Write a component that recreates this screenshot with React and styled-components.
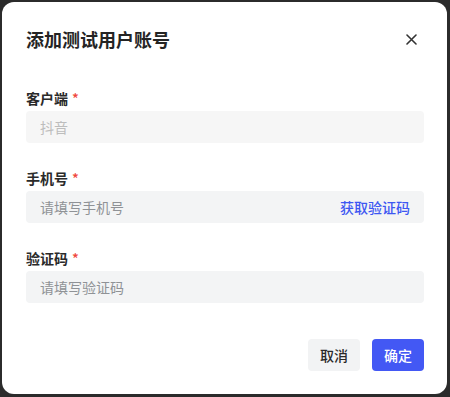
import React from "react";
import styled, { createGlobalStyle } from "styled-components";

const Global = createGlobalStyle`
  html, body { margin: 0; padding: 0; background: #2b2b2b; }
  body { font-family: "Noto Sans CJK SC", "Noto Sans", sans-serif; }
  * { box-sizing: border-box; }
`;

const Backdrop = styled.div`
  width: 450px;
  height: 397px;
  padding: 2px 3px 3px 2px;
`;

const Modal = styled.div`
  width: 445px;
  height: 392px;
  background: #fff;
  border-radius: 12px;
  padding: 24px 23px 23px 24px;
  display: flex;
  flex-direction: column;
`;

const Header = styled.div`
  display: flex;
  align-items: center;
  justify-content: space-between;
  height: 26px;
  margin-bottom: 35px;
`;

const Title = styled.h2`
  margin: 0;
  font-size: 18px;
  line-height: 26px;
  font-weight: 600;
  color: #242424;
`;

const Close = styled.button`
  border: 0;
  background: none;
  padding: 0;
  width: 20px;
  height: 20px;
  display: flex;
  align-items: center;
  justify-content: center;
  margin-right: 3px;
  cursor: pointer;
`;

const Field = styled.div`
  display: flex;
  flex-direction: column;
  margin-bottom: ${(p) => (p.$last ? "36px" : "24px")};
`;

const Label = styled.label`
  font-size: 14px;
  line-height: 22px;
  font-weight: 600;
  color: #2a2a2a;
  margin-bottom: 2px;
`;

const Star = styled.span`
  color: #f0473a;
  margin-left: 4px;
  font-weight: 500;
`;

const InputBox = styled.div`
  height: 32px;
  border-radius: 4px;
  background: ${(p) => (p.$disabled ? "#f6f6f6" : "#f3f4f5")};
  display: flex;
  align-items: center;
  padding: 0 14px;
`;

const Input = styled.input`
  flex: 1;
  border: 0;
  outline: 0;
  background: transparent;
  font-family: inherit;
  font-size: 14px;
  color: #222;
  padding: 0;
  &::placeholder { color: #8f9296; }
  &:disabled { color: #bdbdbd; }
`;

const Link = styled.span`
  font-size: 14px;
  font-weight: 500;
  color: #3d57f2;
  cursor: pointer;
`;

const Footer = styled.div`
  display: flex;
  justify-content: flex-end;
  gap: 12px;
`;

const Button = styled.button`
  height: 32px;
  width: 52px;
  border: 0;
  border-radius: 4px;
  font-family: inherit;
  font-size: 14px;
  font-weight: 500;
  padding: 0;
  background: ${(p) => (p.$primary ? "#4358f4" : "#f2f3f4")};
  color: ${(p) => (p.$primary ? "#fff" : "#2a2a2a")};
  cursor: pointer;
`;

export default function App() {
  return (
    <>
      <Global />
      <Backdrop>
        <Modal>
          <Header>
            <Title>添加测试用户账号</Title>
            <Close aria-label="关闭">
              <svg width="11" height="11" viewBox="0 0 11 11">
                <path d="M1 1L10 10M10 1L1 10" stroke="#333" strokeWidth="1.6" strokeLinecap="round" />
              </svg>
            </Close>
          </Header>
          <Field>
            <Label>客户端<Star>*</Star></Label>
            <InputBox $disabled>
              <Input disabled value="抖音" readOnly />
            </InputBox>
          </Field>
          <Field>
            <Label>手机号<Star>*</Star></Label>
            <InputBox>
              <Input placeholder="请填写手机号" />
              <Link>获取验证码</Link>
            </InputBox>
          </Field>
          <Field $last>
            <Label>验证码<Star>*</Star></Label>
            <InputBox>
              <Input placeholder="请填写验证码" />
            </InputBox>
          </Field>
          <Footer>
            <Button>取消</Button>
            <Button $primary>确定</Button>
          </Footer>
        </Modal>
      </Backdrop>
    </>
  );
}
